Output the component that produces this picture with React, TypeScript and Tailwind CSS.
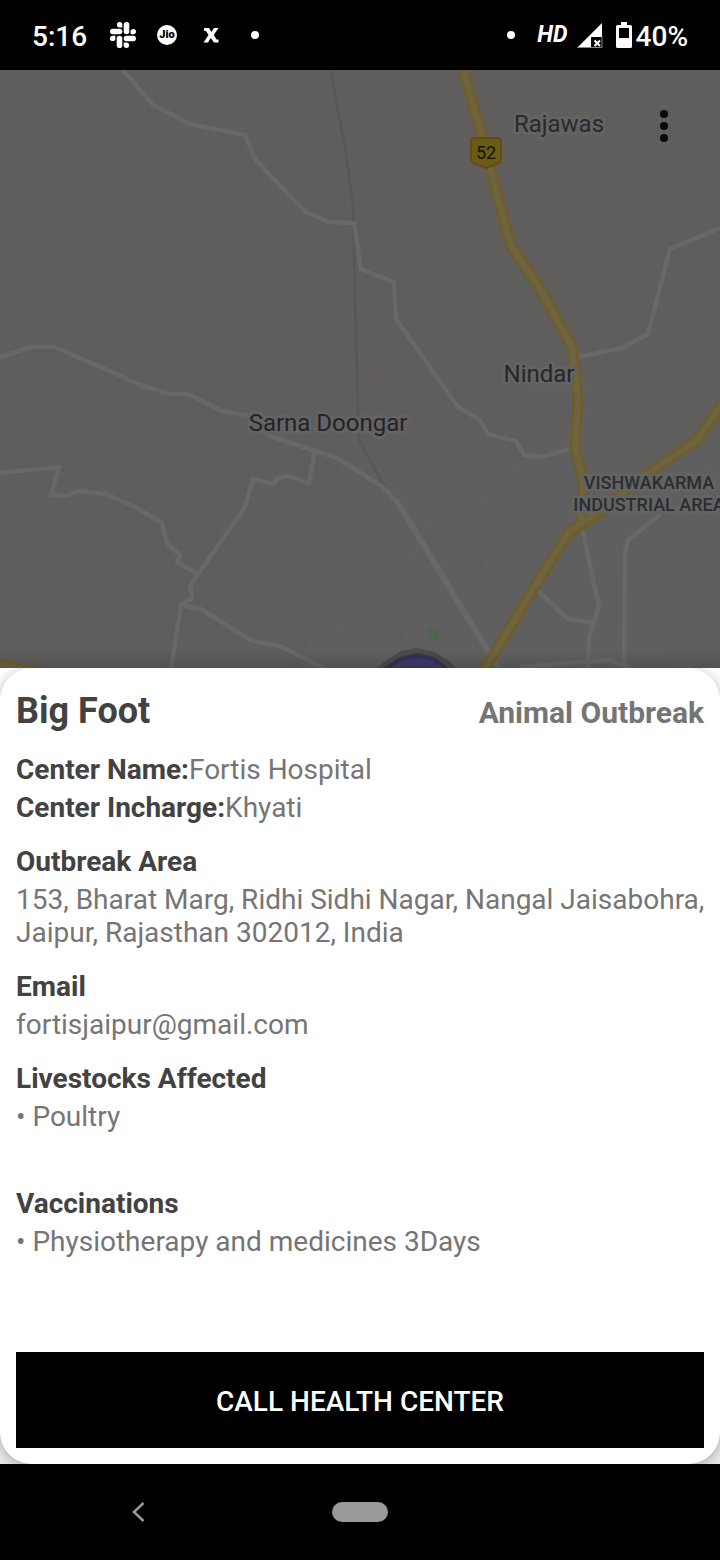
import React from "react";

const minorRoads = [
  "M121 68 L153 105 L190 124 L245 135 L255 159 L290 196 L306 212 L329 222 L354 223 L361 269 L394 282 L396 319 L458 407 L480 420 L488 434 L516 441 L524 455 L541 457 L570 449",
  "M0 357 L31 347 L54 347 L110 371 L140 385 L170 394 L188 394 L222 411 L249 416 L270 436 L315 451 L337 458 L383 487 L398 503",
  "M0 473 L59 467 L51 495 L66 496 L79 491 L106 494 L135 507 L162 523 L167 543 L180 555 L177 562 L198 574",
  "M315 451 L309 483 L288 476 L278 478 L273 484 L253 479 L245 507 L198 574 L190 587 L192 598 L181 605 L201 609 L252 641 L280 646 L325 669",
  "M181 605 L171 669",
  "M579 357 L622 348 L648 334 L670 249 L720 228",
  "M582 528 L599 606 L589 638 L588 669",
  "M538 591 L568 619 L595 623",
  "M661 514 L628 540 L625 552 L624 669",
  "M520 667 L610 660 L630 669",
];

const highways = [
  "M462 62 L467 83 L482 137 L498 198 L511 246 L539 287 L572 347 L578 400 L575 448 L583 480 L582 520",
  "M724 402 L697 440 L650 472 L602 509",
  "M602 510 L569 532 L535 586 L490 661 L476 678",
  "M-4 664 L36 672",
];

function MapLabel({ x, y, size, weight, color, children }: {
  x: number; y: number; size: number; weight: number; color: string; children: string;
}) {
  return (
    <text x={x} y={y} fontSize={size} fontWeight={weight} fill={color} textAnchor="middle"
      stroke="#646361" strokeWidth="6" strokeLinejoin="round" paintOrder="stroke">
      {children}
    </text>
  );
}

function AreaMap() {
  return (
    <svg viewBox="0 70 720 598" className="block h-auto w-full" role="img" aria-label="Map of the outbreak area">
      <defs>
        <filter id="soft"><feGaussianBlur stdDeviation="2" /></filter>
        <linearGradient id="shade" x1="0" x2="0" y1="0" y2="1">
          <stop offset="0" stopColor="#000" stopOpacity="0" />
          <stop offset="1" stopColor="#000" stopOpacity="0.13" />
        </linearGradient>
      </defs>
      <rect y="70" width="720" height="598" fill="#5f5e5c" />
      <g fill="#615e61" filter="url(#soft)">
        <path d="M528 384 L570 382 L598 378 L590 402 L592 424 L618 430 L618 452 L640 474 L690 452 L720 468 L720 556 L690 566 L662 600 L652 640 L664 668 L300 668 L314 630 L332 626 L342 612 L344 640 L372 652 L416 640 L410 586 L412 568 L440 560 L474 566 L492 580 L482 556 L450 548 L446 524 L426 530 L424 550 L386 540 L384 504 L420 480 L440 490 L478 500 L500 468 L520 462 L544 440 L570 440 L570 408 L528 402 Z" />
        <path d="M340 468 L362 454 L398 482 L418 486 L414 520 L428 548 L408 566 L390 544 L372 500 Z" />
        <path d="M498 494 L525 498 L522 516 L500 510 Z" />
        <path d="M404 624 L466 648 L470 668 L410 668 Z" />
      </g>
      <path d="M521 285 L525 274 L530 284 Z M428 627 L438 630 L439 642 L426 637 Z" fill="#526451" />
      <path d="M330 68 L345 147 L353 205 L355 300 L359 440 L383 484 L398 503" fill="none" stroke="#55585a" strokeWidth="2.5" />
      <g fill="none" stroke="#686868" strokeWidth="4.5" strokeLinejoin="round">
        {minorRoads.map((d) => <path key={d} d={d} />)}
        <path d="M396 500 L420 539 L467 617 L499 669" strokeWidth="6" />
      </g>
      <g fill="none" strokeLinejoin="round">
        {highways.map((d) => <path key={d} d={d} stroke="#725c28" strokeWidth="11" />)}
        <path d="M569 536 L604 512" stroke="#725c28" strokeWidth="7" />
        {highways.map((d) => <path key={d} d={d} stroke="#6d6440" strokeWidth="6" />)}
      </g>
      <path d="M374 670 L387 660 L401 651 L417 648 L435 652 L449 661 L459 670 Z" fill="#4c4b49" />
      <path d="M381 670 L398 658 L417 653 L434 657 L451 670 Z" fill="#333158" />
      <path d="M387 670 L401 661 L417 658 L433 661 L446 670 Z" fill="#3e3b6c" />
      <path d="M474 138 H498 Q501 138 501 142 V160 Q501 162 499 163 L486 168 L473 163 Q471 162 471 160 V142 Q471 138 474 138 Z" fill="#6b5c15" stroke="#654b15" strokeWidth="2" />
      <g className="font-[Roboto,sans-serif]">
        <text x="486" y="159" fontSize="18" fill="#15140c" textAnchor="middle">52</text>
        <MapLabel x={559} y={132} size={24} weight={400} color="#292a2d">Rajawas</MapLabel>
        <MapLabel x={539} y={382} size={24} weight={400} color="#25272b">Nindar</MapLabel>
        <MapLabel x={328} y={431} size={24} weight={400} color="#222428">Sarna Doongar</MapLabel>
        <MapLabel x={649} y={489} size={18} weight={500} color="#292e34">VISHWAKARMA</MapLabel>
        <MapLabel x={649} y={511} size={18} weight={500} color="#292e34">INDUSTRIAL AREA</MapLabel>
      </g>
      <rect y="650" width="720" height="18" fill="url(#shade)" />
    </svg>
  );
}

function StatusBar() {
  return (
    <header className="flex h-[70px] items-center justify-between bg-black px-8 text-[28px] font-medium text-white">
      <div className="flex items-center">
        <span className="w-[78px] pt-1">5:16</span>
        <svg viewBox="0 0 26 26" width="26" height="26" fill="currentColor" aria-label="Slack">
          {[0, 90, 180, 270].map((r) => (
            <g key={r} transform={`rotate(${r} 13 13)`}>
              <rect x="13.700" y="0" width="5.600" height="12.300" rx="2.800" />
              <path d="M9.600 0 A2.700 2.700 0 0 0 9.600 5.400 H12.300 V2.700 A2.700 2.700 0 0 0 9.600 0 Z" />
            </g>
          ))}
        </svg>
        <svg viewBox="0 0 20 20" width="20" height="20" className="ml-[21px]" aria-label="Jio">
          <circle cx="10" cy="10" r="10" fill="#fff" />
          <text x="10" y="13" fontSize="11" fontWeight="900" textAnchor="middle" fill="#000">Jio</text>
        </svg>
        <svg viewBox="0 0 16 16" width="16" height="16" className="ml-[26px]" fill="currentColor" aria-label="X">
          <path d="M1 1 H6 L8.500 5 L11 1 H15.500 L10.800 8 L13.500 12.500 H15.500 V15.500 H11 L7.800 11 L5 15.500 H0.500 L5.500 8 L3 4 H1 Z" />
        </svg>
        <span className="ml-8 size-2 rounded-full bg-white" />
      </div>
      <div className="flex items-center">
        <span className="size-2 rounded-full bg-white" />
        <span className="ml-[22px] text-[23px] font-bold italic">HD</span>
        <svg viewBox="0 0 26 26" width="26" height="26" className="ml-[9px]" aria-label="No signal">
          <path d="M0 26 L25 1 V15 H14 V26 Z" fill="#fff" />
          <path d="M0 25.500 H25 V14" stroke="#888" fill="none" />
          <path d="M17.500 18.500 L23 24 M23 18.500 L17.500 24" stroke="#fff" strokeWidth="2" />
        </svg>
        <svg viewBox="0 0 16 26" width="16" height="26" className="mr-1 ml-[13px]" aria-label="Battery">
          <path fillRule="evenodd" fill="#fff" d="M5 0 H11 V3 H14.500 Q16 3 16 4.500 V24.500 Q16 26 14.500 26 H1.500 Q0 26 0 24.500 V4.500 Q0 3 1.500 3 H5 Z M3 6 V16 H13 V6 Z" />
        </svg>
        <span className="pt-1">40%</span>
      </div>
    </header>
  );
}

function Section({ title, children }: { title: string; children: React.ReactNode }) {
  return (
    <section className="mt-[21px]">
      <h2 className="mb-[5px] font-bold text-[#424242]">{title}</h2>
      {children}
    </section>
  );
}

export default function App() {
  return (
    <div className="flex min-h-screen flex-col bg-black font-[Roboto,sans-serif]">
      <StatusBar />
      <div className="relative">
        <AreaMap />
        <button aria-label="More options" className="absolute top-8 right-10 flex h-12 w-8 flex-col items-center justify-center gap-1">
          <span className="size-2 rounded-full bg-[#080808]" />
          <span className="size-2 rounded-full bg-[#080808]" />
          <span className="size-2 rounded-full bg-[#080808]" />
        </button>
      </div>
      <div className="flex flex-1 flex-col bg-linear-to-b from-white to-[#eeeeee]">
        <main className="flex flex-1 flex-col rounded-[32px] bg-white p-4 text-[28px] leading-[33px] text-[#757575] shadow-[0_3px_14px_rgba(0,0,0,0.3)] [clip-path:inset(0_-32px)]">
          <div className="mt-1 mb-[19px] flex items-center justify-between">
            <h1 className="text-4xl leading-[46px] font-bold text-[#424242]">Big Foot</h1>
            <p className="pt-1 text-[30px] leading-[42px] font-bold">Animal Outbreak</p>
          </div>
          <p className="mb-[5px]"><b className="text-[#424242]">Center Name:</b>Fortis Hospital</p>
          <p><b className="text-[#424242]">Center Incharge:</b>Khyati</p>
          <Section title="Outbreak Area">
            <p className="-mr-3">153, Bharat Marg, Ridhi Sidhi Nagar, Nangal Jaisabohra, Jaipur, Rajasthan 302012, India</p>
          </Section>
          <Section title="Email"><p>fortisjaipur@gmail.com</p></Section>
          <Section title="Livestocks Affected"><p className="mb-[33px]">• Poultry</p></Section>
          <Section title="Vaccinations"><p className="mb-[33px]">• Physiotherapy and medicines 3Days</p></Section>
          <button className="mt-auto h-24 shrink-0 bg-black pt-[2px] font-medium text-white">CALL HEALTH CENTER</button>
        </main>
      </div>
      <nav className="grid h-24 grid-cols-[1fr_56px_1fr] items-center bg-black">
        <button aria-label="Back" className="ml-[131px] flex size-6 items-center justify-start">
          <svg viewBox="0 0 24 24" width="24" height="24" fill="none" stroke="#999" strokeWidth="2.500">
            <path d="M12.500 3 L3 12 L12.500 21" />
          </svg>
        </button>
        <button aria-label="Home" className="h-5 rounded-full bg-[#999]" />
      </nav>
    </div>
  );
}
